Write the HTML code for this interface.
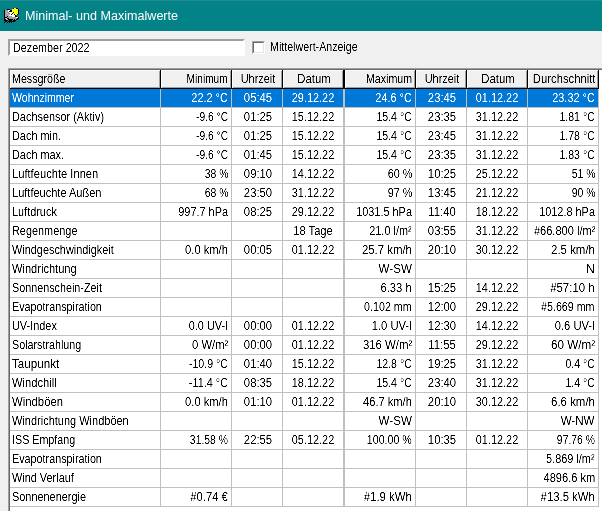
<!DOCTYPE html><html lang="de"><head><meta charset="utf-8"><title>Minimal- und Maximalwerte</title><style>
html,body{margin:0;padding:0}
body{width:602px;height:511px;overflow:hidden;background:#f0f0f0;position:relative;
 font-family:"Liberation Sans",sans-serif;font-size:12.5px;color:#000;line-height:1}
div,span{position:absolute;box-sizing:border-box;white-space:nowrap}
#tb{left:0;top:0;width:602px;height:31px;background:#038387;border-top:1px solid #1e8c90}
#tt{left:25px;top:8px;color:#fff;font-size:12px;line-height:16px;transform-origin:0 0;transform:scaleX(1.048)}
#ed{left:8px;top:39px;width:237px;height:17px;background:#fff;border-style:solid;border-width:2px;
 border-color:#a0a0a0 #fff #fff #a0a0a0}
#cb{left:252px;top:41px;width:13px;height:13px;background:#fff;border-style:solid;border-width:1px;border-color:#a0a0a0 #fff #fff #a0a0a0}
#cb i{position:absolute;left:0;top:0;width:11px;height:11px;box-sizing:border-box;border-style:solid;border-width:1px;border-color:#696969 #e3e3e3 #e3e3e3 #696969}
#g{left:8px;top:68px;width:620px;height:460px;background:#fff;border-top:1px solid #a0a0a0;border-left:1px solid #a0a0a0}
#g2{left:9px;top:69px;width:620px;height:460px;background:#fff;border-top:1px solid #696969;border-left:1px solid #696969}
.h{top:70px;height:19px;background:
 linear-gradient(#000,#000) right top/var(--bw,1px) 100% no-repeat,
 linear-gradient(#000,#000) left bottom/100% 1px no-repeat,
 linear-gradient(#a0a0a0,#a0a0a0) right var(--bw,1px) top 1px/1px calc(100% - 2px) no-repeat,
 linear-gradient(#a0a0a0,#a0a0a0) left 1px bottom 1px/calc(100% - 1px - var(--bw,1px)) 1px no-repeat,
 linear-gradient(#fff,#fff) left top/calc(100% - var(--bw,1px)) 1px no-repeat,
 linear-gradient(#fff,#fff) left top/1px calc(100% - 1px) no-repeat,
 #f0f0f0}
.hl{left:10px;width:589px;height:1px;background:#c0c0c0}
.vl{top:89px;height:418px;background:#c0c0c0}
#sel{left:10px;top:89px;width:588px;height:18px;background:#0078d7}
.t{height:18px;line-height:18px}
.t span{top:0;transform:scaleX(var(--s,0.872))}
.l span{left:2px;transform-origin:0 50%}
.r span{right:3px;transform-origin:100% 50%}
.c span{left:50%;transform:translateX(-50%) scaleX(var(--s,0.872));transform-origin:50% 50%}
#txt{left:0;top:0;width:602px;height:511px;filter:url(#thr)}
.w{color:#fff}
.u span{margin-left:1px}
.x{transform:scaleX(0.872);transform-origin:0 50%;line-height:18px;height:18px}
</style></head><body>
<svg width="0" height="0" style="position:absolute"><defs><filter id="thr" x="0" y="0" width="100%" height="100%" color-interpolation-filters="sRGB"><feComponentTransfer><feFuncA type="table" tableValues="0 0 0.5 1 1"/></feComponentTransfer></filter></defs></svg>
<div id="tb"></div>
<svg width="16" height="16" viewBox="0 0 16 16" shape-rendering="crispEdges" style="position:absolute;left:4px;top:8px"><rect x="9" y="0" width="1" height="1" fill="#000"/><rect x="10" y="0" width="1" height="1" fill="#fff"/><rect x="11" y="0" width="1" height="1" fill="#ff0"/><rect x="12" y="0" width="2" height="1" fill="#000"/><rect x="3" y="1" width="3" height="1" fill="#000"/><rect x="8" y="1" width="6" height="1" fill="#ff0"/><rect x="14" y="1" width="1" height="1" fill="#000"/><rect x="0" y="2" width="1" height="1" fill="#000"/><rect x="1" y="2" width="3" height="1" fill="#a0a0a0"/><rect x="4" y="2" width="2" height="1" fill="#fff"/><rect x="6" y="2" width="2" height="1" fill="#000"/><rect x="8" y="2" width="6" height="1" fill="#ff0"/><rect x="14" y="2" width="1" height="1" fill="#000"/><rect x="0" y="3" width="1" height="1" fill="#000"/><rect x="1" y="3" width="3" height="1" fill="#a0a0a0"/><rect x="4" y="3" width="1" height="1" fill="#fff"/><rect x="5" y="3" width="3" height="1" fill="#000"/><rect x="8" y="3" width="6" height="1" fill="#ff0"/><rect x="14" y="3" width="1" height="1" fill="#000"/><rect x="0" y="4" width="1" height="1" fill="#000"/><rect x="1" y="4" width="1" height="1" fill="#a0a0a0"/><rect x="2" y="4" width="1" height="1" fill="#c0c0c0"/><rect x="3" y="4" width="1" height="1" fill="#a0a0a0"/><rect x="4" y="4" width="1" height="1" fill="#808080"/><rect x="5" y="4" width="4" height="1" fill="#fff"/><rect x="9" y="4" width="1" height="1" fill="#000"/><rect x="10" y="4" width="4" height="1" fill="#ff0"/><rect x="14" y="4" width="1" height="1" fill="#000"/><rect x="0" y="5" width="1" height="1" fill="#000"/><rect x="1" y="5" width="2" height="1" fill="#a0a0a0"/><rect x="3" y="5" width="1" height="1" fill="#c0c0c0"/><rect x="4" y="5" width="1" height="1" fill="#a0a0a0"/><rect x="5" y="5" width="1" height="1" fill="#808080"/><rect x="6" y="5" width="2" height="1" fill="#fff"/><rect x="8" y="5" width="1" height="1" fill="#000"/><rect x="9" y="5" width="5" height="1" fill="#ff0"/><rect x="14" y="5" width="1" height="1" fill="#000"/><rect x="0" y="6" width="1" height="1" fill="#000"/><rect x="1" y="6" width="3" height="1" fill="#a0a0a0"/><rect x="4" y="6" width="1" height="1" fill="#c0c0c0"/><rect x="5" y="6" width="1" height="1" fill="#a0a0a0"/><rect x="6" y="6" width="1" height="1" fill="#fff"/><rect x="7" y="6" width="1" height="1" fill="#000"/><rect x="8" y="6" width="2" height="1" fill="#fff"/><rect x="10" y="6" width="1" height="1" fill="#000"/><rect x="11" y="6" width="2" height="1" fill="#ff0"/><rect x="13" y="6" width="1" height="1" fill="#000"/><rect x="0" y="7" width="1" height="1" fill="#000"/><rect x="1" y="7" width="4" height="1" fill="#a0a0a0"/><rect x="5" y="7" width="6" height="1" fill="#fff"/><rect x="11" y="7" width="1" height="1" fill="#000"/><rect x="0" y="8" width="1" height="1" fill="#000"/><rect x="1" y="8" width="2" height="1" fill="#a0a0a0"/><rect x="3" y="8" width="1" height="1" fill="#000"/><rect x="4" y="8" width="4" height="1" fill="#a0a0a0"/><rect x="8" y="8" width="3" height="1" fill="#fff"/><rect x="11" y="8" width="2" height="1" fill="#000"/><rect x="0" y="9" width="3" height="1" fill="#000"/><rect x="3" y="9" width="9" height="1" fill="#a0a0a0"/><rect x="12" y="9" width="2" height="1" fill="#fff"/><rect x="14" y="9" width="1" height="1" fill="#000"/><rect x="0" y="10" width="1" height="1" fill="#000"/><rect x="1" y="10" width="2" height="1" fill="#c0c0c0"/><rect x="3" y="10" width="2" height="1" fill="#000"/><rect x="5" y="10" width="8" height="1" fill="#a0a0a0"/><rect x="13" y="10" width="2" height="1" fill="#000"/><rect x="0" y="11" width="2" height="1" fill="#000"/><rect x="2" y="11" width="2" height="1" fill="#c0c0c0"/><rect x="4" y="11" width="5" height="1" fill="#000"/><rect x="9" y="11" width="1" height="1" fill="#a0a0a0"/><rect x="10" y="11" width="1" height="1" fill="#000"/><rect x="11" y="11" width="1" height="1" fill="#a0a0a0"/><rect x="12" y="11" width="2" height="1" fill="#000"/><rect x="0" y="12" width="4" height="1" fill="#000"/><rect x="5" y="12" width="3" height="1" fill="#000"/><rect x="9" y="12" width="3" height="1" fill="#000"/><rect x="1" y="13" width="2" height="1" fill="#000"/><rect x="4" y="13" width="7" height="1" fill="#000"/><rect x="0" y="14" width="1" height="1" fill="#000"/><rect x="3" y="14" width="1" height="1" fill="#000"/><rect x="5" y="14" width="1" height="1" fill="#000"/><rect x="7" y="14" width="1" height="1" fill="#000"/></svg>
<div id="tt">Minimal- und Maximalwerte</div>
<div id="ed"></div>
<div id="cb"><i></i></div>
<div id="g"></div><div id="g2"></div>
<div class="h" style="left:10px;width:151px"></div>
<div class="h" style="left:161px;width:71px"></div>
<div class="h" style="left:232px;width:51px"></div>
<div class="h" style="left:283px;width:62px;--bw:2px"></div>
<div class="h" style="left:345px;width:71px"></div>
<div class="h" style="left:416px;width:51px"></div>
<div class="h" style="left:467px;width:61px"></div>
<div class="h" style="left:528px;width:71px"></div>
<div id="sel"></div>
<div class="hl" style="top:107px"></div>
<div class="hl" style="top:126px"></div>
<div class="hl" style="top:145px"></div>
<div class="hl" style="top:164px"></div>
<div class="hl" style="top:183px"></div>
<div class="hl" style="top:202px"></div>
<div class="hl" style="top:221px"></div>
<div class="hl" style="top:240px"></div>
<div class="hl" style="top:259px"></div>
<div class="hl" style="top:278px"></div>
<div class="hl" style="top:297px"></div>
<div class="hl" style="top:316px"></div>
<div class="hl" style="top:335px"></div>
<div class="hl" style="top:354px"></div>
<div class="hl" style="top:373px"></div>
<div class="hl" style="top:392px"></div>
<div class="hl" style="top:411px"></div>
<div class="hl" style="top:430px"></div>
<div class="hl" style="top:449px"></div>
<div class="hl" style="top:468px"></div>
<div class="hl" style="top:487px"></div>
<div class="hl" style="top:506px"></div>
<div class="vl" style="left:160px;width:1px"></div>
<div class="vl" style="left:231px;width:1px"></div>
<div class="vl" style="left:282px;width:1px"></div>
<div class="vl" style="left:343px;width:2px"></div>
<div class="vl" style="left:415px;width:1px"></div>
<div class="vl" style="left:466px;width:1px"></div>
<div class="vl" style="left:527px;width:1px"></div>
<div class="vl" style="left:598px;width:1px"></div>
<div id="txt"><span class="x" style="left:13px;top:39px;transform:scaleX(.861)">Dezember 2022</span>
<span class="x" style="left:270px;top:38px;transform:scaleX(.853)">Mittelwert-Anzeige</span>
<div class="t l" style="left:10px;top:70px;width:150px;--s:0.8555"><span>Messgröße</span></div>
<div class="t r" style="left:161px;top:70px;width:70px;--s:0.8111"><span>Minimum</span></div>
<div class="t c u" style="left:232px;top:70px;width:50px"><span>Uhrzeit</span></div>
<div class="t c" style="left:283px;top:70px;width:60px;--s:0.907;margin-left:1px"><span>Datum</span></div>
<div class="t r" style="left:345px;top:70px;width:70px;--s:0.8526"><span>Maximum</span></div>
<div class="t c u" style="left:416px;top:70px;width:50px"><span>Uhrzeit</span></div>
<div class="t c" style="left:467px;top:70px;width:60px;--s:0.907;margin-left:1px"><span>Datum</span></div>
<div class="t r" style="left:528px;top:70px;width:70px;--s:0.9016"><span>Durchschnitt</span></div>
<div class="t l w" style="left:10px;top:89px;width:150px;--s:0.8448"><span>Wohnzimmer</span></div>
<div class="t r w" style="left:161px;top:89px;width:70px;--s:0.872"><span>22.2 °C</span></div>
<div class="t c u w" style="left:232px;top:89px;width:50px;--s:0.905"><span>05:45</span></div>
<div class="t c w" style="left:283px;top:89px;width:60px"><span>29.12.22</span></div>
<div class="t r w" style="left:345px;top:89px;width:70px;--s:0.872"><span>24.6 °C</span></div>
<div class="t c u w" style="left:416px;top:89px;width:50px;--s:0.905"><span>23:45</span></div>
<div class="t c w" style="left:467px;top:89px;width:60px"><span>01.12.22</span></div>
<div class="t r w" style="left:528px;top:89px;width:70px;--s:0.872"><span>23.32 °C</span></div>
<div class="t l" style="left:10px;top:108px;width:150px;--s:0.872"><span>Dachsensor (Aktiv)</span></div>
<div class="t r" style="left:161px;top:108px;width:70px;--s:0.8192"><span>-9.6 °C</span></div>
<div class="t c u" style="left:232px;top:108px;width:50px;--s:0.905"><span>01:25</span></div>
<div class="t c" style="left:283px;top:108px;width:60px"><span>15.12.22</span></div>
<div class="t r" style="left:345px;top:108px;width:70px;--s:0.8471"><span>15.4 °C</span></div>
<div class="t c u" style="left:416px;top:108px;width:50px;--s:0.905"><span>23:35</span></div>
<div class="t c" style="left:467px;top:108px;width:60px"><span>31.12.22</span></div>
<div class="t r" style="left:528px;top:108px;width:70px;--s:0.8471"><span>1.81 °C</span></div>
<div class="t l" style="left:10px;top:127px;width:150px;--s:0.872"><span>Dach min.</span></div>
<div class="t r" style="left:161px;top:127px;width:70px;--s:0.8192"><span>-9.6 °C</span></div>
<div class="t c u" style="left:232px;top:127px;width:50px;--s:0.905"><span>01:25</span></div>
<div class="t c" style="left:283px;top:127px;width:60px"><span>15.12.22</span></div>
<div class="t r" style="left:345px;top:127px;width:70px;--s:0.8471"><span>15.4 °C</span></div>
<div class="t c u" style="left:416px;top:127px;width:50px;--s:0.905"><span>23:45</span></div>
<div class="t c" style="left:467px;top:127px;width:60px"><span>31.12.22</span></div>
<div class="t r" style="left:528px;top:127px;width:70px;--s:0.8471"><span>1.78 °C</span></div>
<div class="t l" style="left:10px;top:146px;width:150px;--s:0.872"><span>Dach max.</span></div>
<div class="t r" style="left:161px;top:146px;width:70px;--s:0.8192"><span>-9.6 °C</span></div>
<div class="t c u" style="left:232px;top:146px;width:50px;--s:0.905"><span>01:45</span></div>
<div class="t c" style="left:283px;top:146px;width:60px"><span>15.12.22</span></div>
<div class="t r" style="left:345px;top:146px;width:70px;--s:0.8471"><span>15.4 °C</span></div>
<div class="t c u" style="left:416px;top:146px;width:50px;--s:0.905"><span>23:35</span></div>
<div class="t c" style="left:467px;top:146px;width:60px"><span>31.12.22</span></div>
<div class="t r" style="left:528px;top:146px;width:70px;--s:0.8471"><span>1.83 °C</span></div>
<div class="t l" style="left:10px;top:165px;width:150px;--s:0.8931"><span>Luftfeuchte Innen</span></div>
<div class="t r" style="left:161px;top:165px;width:70px;--s:0.8356"><span>38 %</span></div>
<div class="t c u" style="left:232px;top:165px;width:50px;--s:0.905"><span>09:10</span></div>
<div class="t c" style="left:283px;top:165px;width:60px"><span>14.12.22</span></div>
<div class="t r" style="left:345px;top:165px;width:70px;--s:0.872"><span>60 %</span></div>
<div class="t c u" style="left:416px;top:165px;width:50px;--s:0.905"><span>10:25</span></div>
<div class="t c" style="left:467px;top:165px;width:60px"><span>25.12.22</span></div>
<div class="t r" style="left:528px;top:165px;width:70px;--s:0.8356"><span>51 %</span></div>
<div class="t l" style="left:10px;top:184px;width:150px;--s:0.882"><span>Luftfeuchte Außen</span></div>
<div class="t r" style="left:161px;top:184px;width:70px;--s:0.8356"><span>68 %</span></div>
<div class="t c u" style="left:232px;top:184px;width:50px;--s:0.905"><span>23:50</span></div>
<div class="t c" style="left:283px;top:184px;width:60px"><span>31.12.22</span></div>
<div class="t r" style="left:345px;top:184px;width:70px;--s:0.872"><span>97 %</span></div>
<div class="t c u" style="left:416px;top:184px;width:50px;--s:0.905"><span>13:45</span></div>
<div class="t c" style="left:467px;top:184px;width:60px"><span>21.12.22</span></div>
<div class="t r" style="left:528px;top:184px;width:70px;--s:0.8356"><span>90 %</span></div>
<div class="t l" style="left:10px;top:203px;width:150px;--s:0.872"><span>Luftdruck</span></div>
<div class="t r" style="left:161px;top:203px;width:70px;--s:0.872"><span>997.7 hPa</span></div>
<div class="t c u" style="left:232px;top:203px;width:50px;--s:0.905"><span>08:25</span></div>
<div class="t c" style="left:283px;top:203px;width:60px"><span>29.12.22</span></div>
<div class="t r" style="left:345px;top:203px;width:70px;--s:0.872"><span>1031.5 hPa</span></div>
<div class="t c u" style="left:416px;top:203px;width:50px;--s:0.905"><span>11:40</span></div>
<div class="t c" style="left:467px;top:203px;width:60px"><span>18.12.22</span></div>
<div class="t r" style="left:528px;top:203px;width:70px;--s:0.872"><span>1012.8 hPa</span></div>
<div class="t l" style="left:10px;top:222px;width:150px;--s:0.872"><span>Regenmenge</span></div>
<div class="t c" style="left:283px;top:222px;width:60px;--s:0.895"><span>18 Tage</span></div>
<div class="t r" style="left:345px;top:222px;width:70px;--s:0.872"><span>21.0 l/m²</span></div>
<div class="t c u" style="left:416px;top:222px;width:50px;--s:0.905"><span>03:55</span></div>
<div class="t c" style="left:467px;top:222px;width:60px"><span>31.12.22</span></div>
<div class="t r" style="left:528px;top:222px;width:70px;--s:0.8866"><span>#66.800 l/m²</span></div>
<div class="t l" style="left:10px;top:241px;width:150px;--s:0.872"><span>Windgeschwindigkeit</span></div>
<div class="t r" style="left:161px;top:241px;width:70px;--s:0.8943"><span>0.0 km/h</span></div>
<div class="t c u" style="left:232px;top:241px;width:50px;--s:0.905"><span>00:05</span></div>
<div class="t c" style="left:283px;top:241px;width:60px"><span>01.12.22</span></div>
<div class="t r" style="left:345px;top:241px;width:70px;--s:0.9099"><span>25.7 km/h</span></div>
<div class="t c u" style="left:416px;top:241px;width:50px;--s:0.905"><span>20:10</span></div>
<div class="t c" style="left:467px;top:241px;width:60px"><span>30.12.22</span></div>
<div class="t r" style="left:528px;top:241px;width:70px;--s:0.9156"><span>2.5 km/h</span></div>
<div class="t l" style="left:10px;top:260px;width:150px;--s:0.8859"><span>Windrichtung</span></div>
<div class="t r" style="left:345px;top:260px;width:70px;--s:0.9282"><span>W-SW</span></div>
<div class="t r" style="left:528px;top:260px;width:70px;--s:1.0174"><span>N</span></div>
<div class="t l" style="left:10px;top:279px;width:150px;--s:0.8623"><span>Sonnenschein-Zeit</span></div>
<div class="t r" style="left:345px;top:279px;width:70px;--s:0.9021"><span>6.33 h</span></div>
<div class="t c u" style="left:416px;top:279px;width:50px;--s:0.905"><span>15:25</span></div>
<div class="t c" style="left:467px;top:279px;width:60px"><span>14.12.22</span></div>
<div class="t r" style="left:528px;top:279px;width:70px;--s:0.9146"><span>#57:10 h</span></div>
<div class="t l" style="left:10px;top:298px;width:150px;--s:0.8622"><span>Evapotranspiration</span></div>
<div class="t r" style="left:345px;top:298px;width:70px;--s:0.8542"><span>0.102 mm</span></div>
<div class="t c u" style="left:416px;top:298px;width:50px;--s:0.905"><span>12:00</span></div>
<div class="t c" style="left:467px;top:298px;width:60px"><span>29.12.22</span></div>
<div class="t r" style="left:528px;top:298px;width:70px;--s:0.8559"><span>#5.669 mm</span></div>
<div class="t l" style="left:10px;top:317px;width:150px;--s:0.872"><span>UV-Index</span></div>
<div class="t r" style="left:161px;top:317px;width:70px;--s:0.872"><span>0.0 UV-I</span></div>
<div class="t c u" style="left:232px;top:317px;width:50px;--s:0.905"><span>00:00</span></div>
<div class="t c" style="left:283px;top:317px;width:60px"><span>01.12.22</span></div>
<div class="t r" style="left:345px;top:317px;width:70px;--s:0.8955"><span>1.0 UV-I</span></div>
<div class="t c u" style="left:416px;top:317px;width:50px;--s:0.905"><span>12:30</span></div>
<div class="t c" style="left:467px;top:317px;width:60px"><span>14.12.22</span></div>
<div class="t r" style="left:528px;top:317px;width:70px;--s:0.8949"><span>0.6 UV-I</span></div>
<div class="t l" style="left:10px;top:336px;width:150px;--s:0.8596"><span>Solarstrahlung</span></div>
<div class="t r" style="left:161px;top:336px;width:70px;--s:0.8984"><span>0 W/m²</span></div>
<div class="t c u" style="left:232px;top:336px;width:50px;--s:0.905"><span>00:00</span></div>
<div class="t c" style="left:283px;top:336px;width:60px"><span>01.12.22</span></div>
<div class="t r" style="left:345px;top:336px;width:70px;--s:0.9099"><span>316 W/m²</span></div>
<div class="t c u" style="left:416px;top:336px;width:50px;--s:0.905"><span>11:55</span></div>
<div class="t c" style="left:467px;top:336px;width:60px"><span>29.12.22</span></div>
<div class="t r" style="left:528px;top:336px;width:70px;--s:0.9374"><span>60 W/m²</span></div>
<div class="t l" style="left:10px;top:355px;width:150px;--s:0.9315"><span>Taupunkt</span></div>
<div class="t r" style="left:161px;top:355px;width:70px;--s:0.8497"><span>-10.9 °C</span></div>
<div class="t c u" style="left:232px;top:355px;width:50px;--s:0.905"><span>01:40</span></div>
<div class="t c" style="left:283px;top:355px;width:60px"><span>15.12.22</span></div>
<div class="t r" style="left:345px;top:355px;width:70px;--s:0.8471"><span>12.8 °C</span></div>
<div class="t c u" style="left:416px;top:355px;width:50px;--s:0.905"><span>19:25</span></div>
<div class="t c" style="left:467px;top:355px;width:60px"><span>31.12.22</span></div>
<div class="t r" style="left:528px;top:355px;width:70px;--s:0.8419"><span>0.4 °C</span></div>
<div class="t l" style="left:10px;top:374px;width:150px;--s:0.8923"><span>Windchill</span></div>
<div class="t r" style="left:161px;top:374px;width:70px;--s:0.872"><span>-11.4 °C</span></div>
<div class="t c u" style="left:232px;top:374px;width:50px;--s:0.905"><span>08:35</span></div>
<div class="t c" style="left:283px;top:374px;width:60px"><span>18.12.22</span></div>
<div class="t r" style="left:345px;top:374px;width:70px;--s:0.8471"><span>15.4 °C</span></div>
<div class="t c u" style="left:416px;top:374px;width:50px;--s:0.905"><span>23:40</span></div>
<div class="t c" style="left:467px;top:374px;width:60px"><span>31.12.22</span></div>
<div class="t r" style="left:528px;top:374px;width:70px;--s:0.8419"><span>1.4 °C</span></div>
<div class="t l" style="left:10px;top:393px;width:150px;--s:0.9084"><span>Windböen</span></div>
<div class="t r" style="left:161px;top:393px;width:70px;--s:0.8943"><span>0.0 km/h</span></div>
<div class="t c u" style="left:232px;top:393px;width:50px;--s:0.905"><span>01:10</span></div>
<div class="t c" style="left:283px;top:393px;width:60px"><span>01.12.22</span></div>
<div class="t r" style="left:345px;top:393px;width:70px;--s:0.8906"><span>46.7 km/h</span></div>
<div class="t c u" style="left:416px;top:393px;width:50px;--s:0.905"><span>20:10</span></div>
<div class="t c" style="left:467px;top:393px;width:60px"><span>30.12.22</span></div>
<div class="t r" style="left:528px;top:393px;width:70px;--s:0.9156"><span>6.6 km/h</span></div>
<div class="t l" style="left:10px;top:412px;width:150px;--s:0.8796"><span>Windrichtung Windböen</span></div>
<div class="t r" style="left:345px;top:412px;width:70px;--s:0.9282"><span>W-SW</span></div>
<div class="t r" style="left:528px;top:412px;width:70px;--s:0.9282"><span>W-NW</span></div>
<div class="t l" style="left:10px;top:431px;width:150px;--s:0.8581"><span>ISS Empfang</span></div>
<div class="t r" style="left:161px;top:431px;width:70px;--s:0.8284"><span>31.58 %</span></div>
<div class="t c u" style="left:232px;top:431px;width:50px;--s:0.905"><span>22:55</span></div>
<div class="t c" style="left:283px;top:431px;width:60px"><span>05.12.22</span></div>
<div class="t r" style="left:345px;top:431px;width:70px;--s:0.8526"><span>100.00 %</span></div>
<div class="t c u" style="left:416px;top:431px;width:50px;--s:0.905"><span>10:35</span></div>
<div class="t c" style="left:467px;top:431px;width:60px"><span>01.12.22</span></div>
<div class="t r" style="left:528px;top:431px;width:70px;--s:0.8284"><span>97.76 %</span></div>
<div class="t l" style="left:10px;top:450px;width:150px;--s:0.8622"><span>Evapotranspiration</span></div>
<div class="t r" style="left:528px;top:450px;width:70px;--s:0.872"><span>5.869 l/m²</span></div>
<div class="t l" style="left:10px;top:469px;width:150px;--s:0.872"><span>Wind Verlauf</span></div>
<div class="t r" style="left:528px;top:469px;width:70px;--s:0.8894"><span>4896.6 km</span></div>
<div class="t l" style="left:10px;top:488px;width:150px;--s:0.8722"><span>Sonnenenergie</span></div>
<div class="t r" style="left:161px;top:488px;width:70px;--s:0.8962"><span>#0.74 €</span></div>
<div class="t r" style="left:345px;top:488px;width:70px;--s:0.9107"><span>#1.9 kWh</span></div>
<div class="t r" style="left:528px;top:488px;width:70px;--s:0.9062"><span>#13.5 kWh</span></div></div>
</body></html>
